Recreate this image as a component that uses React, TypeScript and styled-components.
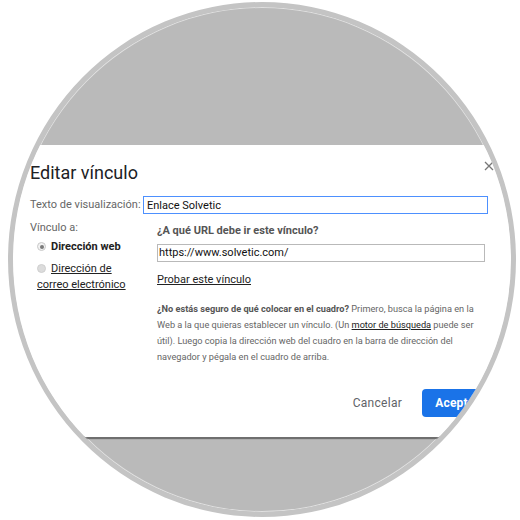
import React from 'react'
import styled, { createGlobalStyle } from 'styled-components'

const GlobalStyle = createGlobalStyle`
    body {
        margin: 0;
        background: #ffffff;
        font-family: Roboto, 'Liberation Sans', Arial, sans-serif;
    }
`

const Page = styled.div`
    width: 520px;
    height: 520px;
    padding: 2px 0 0 8px;
    box-sizing: border-box;
    background: #ffffff;
    overflow: hidden;
`

const Lens = styled.div`
    width: 508px;
    height: 515px;
    box-sizing: border-box;
    border: 5px solid #c4c4c4;
    border-radius: 50%;
    background: #bababa;
    box-shadow: inset 0 0 0 1px rgba(255, 255, 255, 0.55);
    overflow: hidden;
`

const Dialog = styled.div`
    margin: 138px 0 0 -6px;
    width: 520px;
    height: 292px;
    box-sizing: border-box;
    padding: 17px 31px 20px 23px;
    background: #ffffff;
    box-shadow: 0 2px 1px rgba(0, 0, 0, 0.4);
    display: flex;
    flex-direction: column;
`

const Header = styled.div`
    display: flex;
    justify-content: space-between;
    align-items: flex-start;
    padding-right: 2px;
`

const Title = styled.h2`
    margin: 0;
    font-size: 18px;
    line-height: 22px;
    font-weight: 400;
    color: #202124;
`

const Close = styled.button`
    margin-top: -1px;
    padding: 0;
    border: 0;
    background: none;
    width: 10px;
    height: 10px;
    display: flex;
`

const Row = styled.div`
    display: flex;
    align-items: center;
    margin-top: 12px;
`

const Label = styled.span<{ width?: number }>`
    width: ${p => (p.width ? `${p.width}px` : 'auto')};
    font-size: 11px;
    line-height: 14px;
    color: #666666;
    flex-shrink: 0;
`

const TextField = styled.input<{ focused?: boolean; width: number }>`
    width: ${p => p.width}px;
    height: 18px;
    box-sizing: border-box;
    margin: 0;
    padding: 0 ${p => (p.focused ? 3 : 1)}px;
    border: 1px solid ${p => (p.focused ? '#4d90fe' : '#b9b9b9')};
    border-radius: 0;
    outline: none;
    font-family: Roboto, 'Liberation Sans', Arial, sans-serif;
    font-size: 11px;
    color: #111111;
    background: #ffffff;
`

const Body = styled.div`
    display: flex;
    margin-top: 7px;
`

const LeftCol = styled.div`
    width: 127px;
    flex-shrink: 0;
    display: flex;
    flex-direction: column;
`

const RadioRow = styled.div<{ gap: number }>`
    width: 100px;
    margin-top: ${p => p.gap}px;
    padding-left: 7px;
    font-size: 11px;
    line-height: 16px;
    color: #222222;
`

const Radio = styled.span<{ checked?: boolean }>`
    display: inline-block;
    position: relative;
    width: 9px;
    height: 9px;
    margin-right: 5px;
    box-sizing: border-box;
    border-radius: 50%;
    border: 1px solid ${p => (p.checked ? '#c8c8c8' : '#cfcfcf')};
    background: ${p => (p.checked ? '#f2f2f2' : '#dcdcdc')};
    vertical-align: -1px;

    &::after {
        content: '';
        display: ${p => (p.checked ? 'block' : 'none')};
        position: absolute;
        left: 1.5px;
        top: 1.5px;
        width: 4px;
        height: 4px;
        border-radius: 50%;
        background: #7a7a7a;
    }
`

const Strong = styled.b`
    font-weight: 700;
`

const Link = styled.a`
    color: #222222;
    text-decoration: underline;
    cursor: pointer;
`

const RightCol = styled.div`
    display: flex;
    flex-direction: column;
`

const Question = styled.div`
    margin-top: 3px;
    font-size: 11px;
    line-height: 14px;
    font-weight: 700;
    color: #555555;
`

const InputGap = styled.div`
    margin-top: 3px;
`

const TestLink = styled.div`
    margin-top: 11px;
    font-size: 11px;
    line-height: 14px;
`

const Help = styled.p`
    width: 330px;
    margin: 14px 0 0;
    font-size: 9.2px;
    line-height: 16px;
    color: #666666;

    b {
        color: #555555;
    }
`

const Footer = styled.div`
    display: flex;
    justify-content: flex-end;
    align-items: center;
    margin-top: auto;
    padding-right: 4px;
    height: 28px;
`

const TextButton = styled.button`
    margin-right: 20px;
    padding: 0;
    border: 0;
    background: none;
    font-family: Roboto, 'Liberation Sans', Arial, sans-serif;
    font-size: 12px;
    font-weight: 400;
    letter-spacing: 0.3px;
    color: #5f6368;
`

const PrimaryButton = styled.button`
    height: 28px;
    padding: 0 13px;
    border: 0;
    border-radius: 4px;
    background: #1a73e8;
    font-family: Roboto, 'Liberation Sans', Arial, sans-serif;
    font-size: 12px;
    font-weight: 700;
    letter-spacing: 0.2px;
    color: #ffffff;
`

export default function App() {
    return (
        <Page>
            <GlobalStyle />
            <Lens>
                <Dialog>
                    <Header>
                        <Title>Editar vínculo</Title>
                        <Close aria-label="Cerrar">
                            <svg width="10" height="10" viewBox="0 0 10 10">
                                <path d="M1 1 L9 9 M9 1 L1 9" stroke="#777" strokeWidth="1.3" />
                            </svg>
                        </Close>
                    </Header>
                    <Row>
                        <Label width={113}>Texto de visualización:</Label>
                        <TextField focused width={345} defaultValue="Enlace Solvetic" readOnly />
                    </Row>
                    <Body>
                        <LeftCol>
                            <Label>Vínculo a:</Label>
                            <RadioRow gap={4}>
                                <Radio checked />
                                <Strong>Dirección web</Strong>
                            </RadioRow>
                            <RadioRow gap={6}>
                                <Radio />
                                <Link>Dirección de correo electrónico</Link>
                            </RadioRow>
                        </LeftCol>
                        <RightCol>
                            <Question>¿A qué URL debe ir este vínculo?</Question>
                            <InputGap>
                                <TextField width={328} defaultValue="https://www.solvetic.com/" readOnly />
                            </InputGap>
                            <TestLink>
                                <Link>Probar este vínculo</Link>
                            </TestLink>
                            <Help>
                                <b>¿No estás seguro de qué colocar en el cuadro?</b> Primero, busca la página en la
                                Web a la que quieras establecer un vínculo. (Un <Link>motor de búsqueda</Link> puede
                                ser útil). Luego copia la dirección web del cuadro en la barra de dirección del
                                navegador y pégala en el cuadro de arriba.
                            </Help>
                        </RightCol>
                    </Body>
                    <Footer>
                        <TextButton>Cancelar</TextButton>
                        <PrimaryButton>Aceptar</PrimaryButton>
                    </Footer>
                </Dialog>
            </Lens>
        </Page>
    )
}
